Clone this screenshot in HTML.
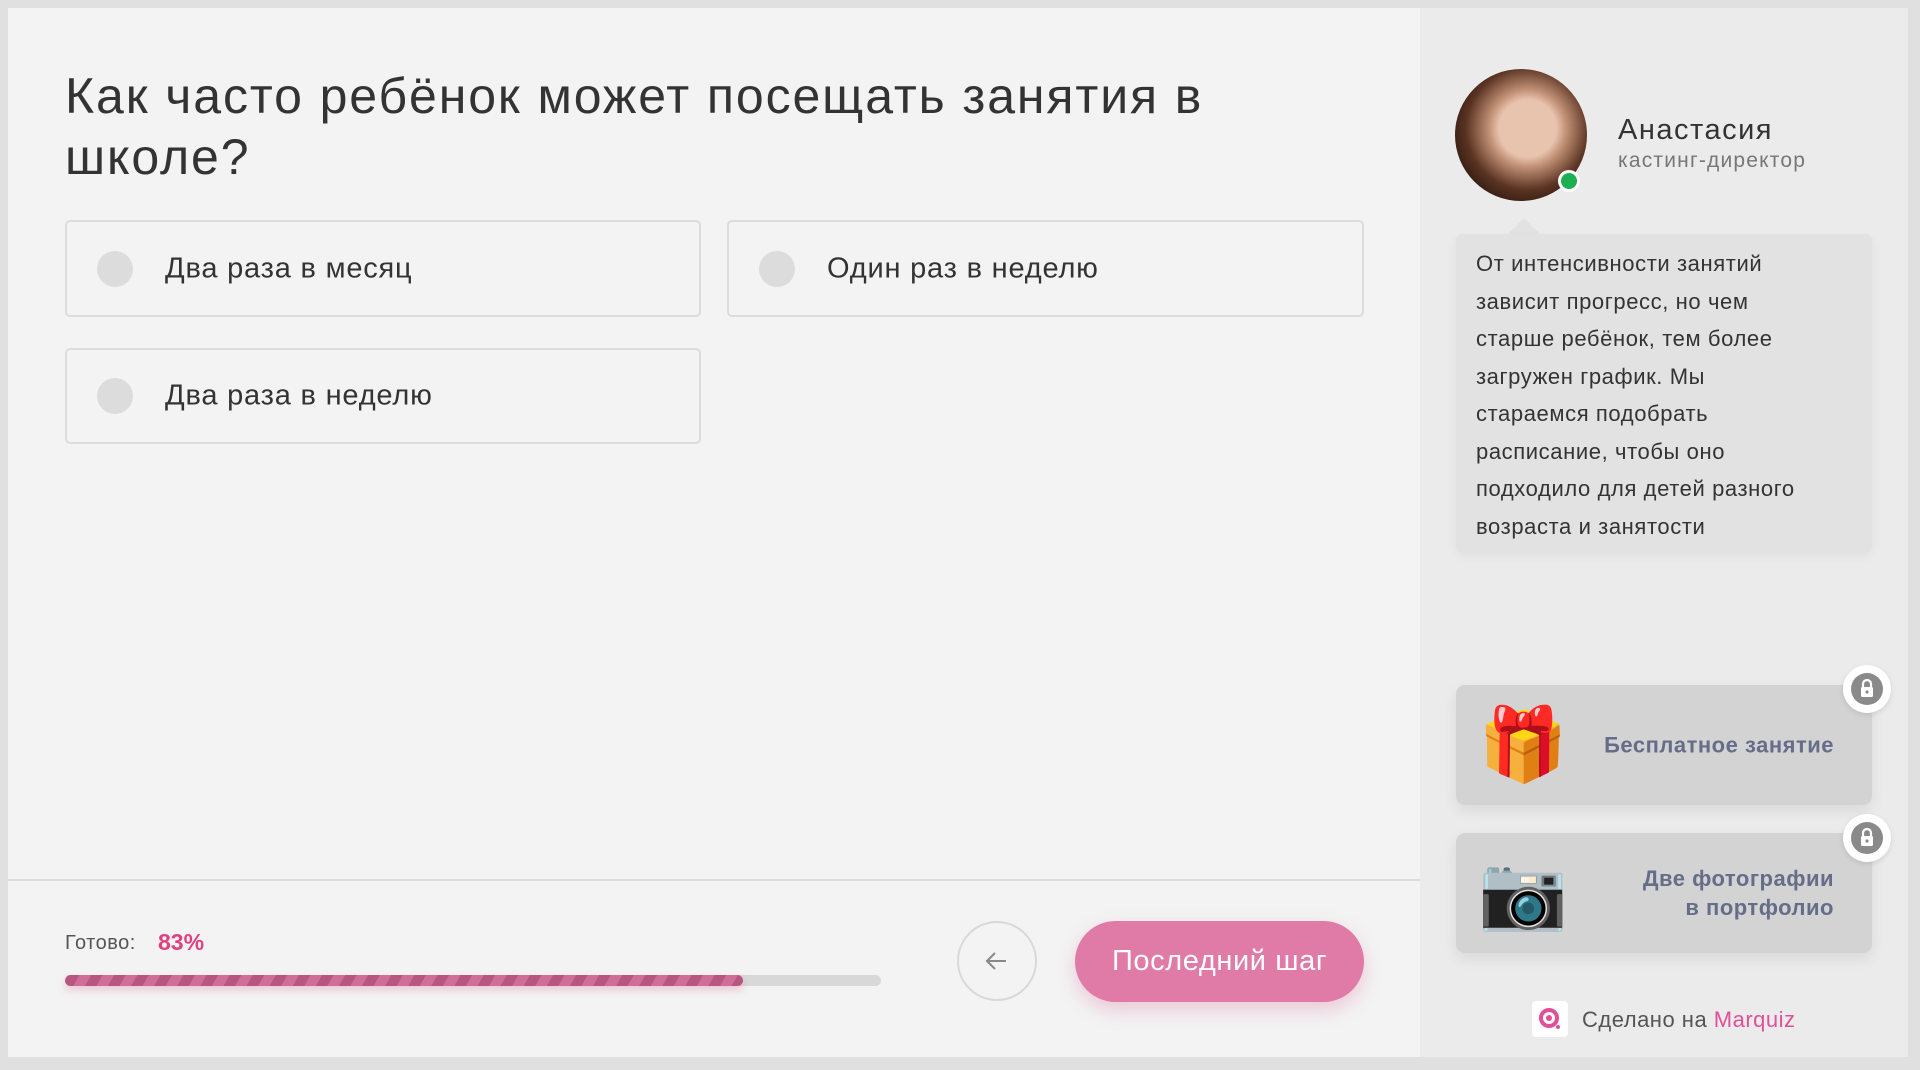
<!DOCTYPE html>
<html><head><meta charset="utf-8"><style>
*{margin:0;padding:0;box-sizing:border-box}
body{width:1920px;height:1070px;background:#e0e0e0;font-family:"Liberation Sans",sans-serif;position:relative;overflow:hidden}
.main{position:absolute;left:8px;top:8px;width:1412px;height:1049px;background:#f3f3f3}
.side{position:absolute;left:1420px;top:8px;width:488px;height:1049px;background:#ebebeb}
.a{position:absolute}
h1{position:absolute;left:65px;top:66px;font-size:50px;font-weight:normal;line-height:61px;color:#333;width:1250px;letter-spacing:1.9px}
.opt{position:absolute;border:2px solid #dcdcdc;border-radius:5px;background:#f3f3f3}
.opt .r{position:absolute;left:30px;top:50%;margin-top:-18px;width:36px;height:36px;border-radius:50%;background:#dcdcdc}
.opt span{position:absolute;left:98px;top:50%;transform:translateY(-50%);font-size:29px;color:#333;letter-spacing:0.8px}
.card{position:absolute;left:1456px;width:416px;height:120px;background:#d3d3d3;border-radius:9px;box-shadow:0 6px 14px rgba(0,0,0,.08)}
.card .t{position:absolute;right:38px;top:50%;transform:translateY(-50%);text-align:right;color:#656d88;font-weight:bold;font-size:22px;line-height:29px;letter-spacing:0.5px}
.lock{position:absolute;width:48px;height:48px;border-radius:50%;background:#fff;box-shadow:0 2px 6px rgba(0,0,0,.1)}
.lock i{position:absolute;left:8px;top:8px;width:32px;height:32px;border-radius:50%;background:#8a8a8a}
</style></head><body>
<div class="main"></div>
<div class="side"></div>
<h1>Как часто ребёнок может посещать занятия в школе?</h1>
<div class="opt" style="left:65px;top:220px;width:636px;height:97px"><div class="r"></div><span>Два раза в месяц</span></div>
<div class="opt" style="left:727px;top:220px;width:637px;height:97px"><div class="r"></div><span>Один раз в неделю</span></div>
<div class="opt" style="left:65px;top:348px;width:636px;height:96px"><div class="r"></div><span>Два раза в неделю</span></div>
<div class="a" style="left:8px;top:879px;width:1412px;height:2px;background:#dcdcdc"></div>
<div class="a" style="left:65px;top:932px;font-size:20px;color:#555;letter-spacing:0.5px">Готово:</div>
<div class="a" style="left:158px;top:929px;font-size:23px;color:#e0407f;font-weight:bold">83%</div>
<div class="a" style="left:65px;top:975px;width:816px;height:11px;border-radius:6px;background:#d8d8d8"></div>
<div class="a" style="left:65px;top:975px;width:678px;height:11px;border-radius:6px;background:repeating-linear-gradient(-60deg,#b85682 0 10px,#cf6e98 10px 20px);box-shadow:0 4px 8px rgba(224,64,127,.25)"></div>
<div class="a" style="left:957px;top:921px;width:80px;height:80px;border-radius:50%;border:2px solid #d8d8d8"></div>
<svg class="a" style="left:984px;top:948px" width="26" height="26" viewBox="0 0 26 26"><path d="M22 13H4M11 5l-8 8 8 8" fill="none" stroke="#888" stroke-width="2"/></svg>
<div class="a" style="left:1075px;top:921px;width:289px;height:81px;border-radius:41px;background:#e07aa6;color:#fff;font-size:29px;text-align:center;line-height:81px;letter-spacing:0.6px;box-shadow:0 8px 18px rgba(224,122,166,.35)">Последний шаг</div>

<div class="a" style="left:1455px;top:69px;width:132px;height:132px;border-radius:50%;background:radial-gradient(circle at 55% 45%,#e8c3ad 0 28%,#c08f74 38%,#5a3322 60%,#2a1710 80%)"></div>
<div class="a" style="left:1558px;top:170px;width:22px;height:22px;border-radius:50%;background:#1cb050;border:3px solid #fff"></div>
<div class="a" style="left:1618px;top:114px;font-size:29px;color:#333;letter-spacing:1.5px">Анастасия</div>
<div class="a" style="left:1618px;top:149px;font-size:21px;color:#777;letter-spacing:1.2px">кастинг-директор</div>
<div class="a" style="left:1508px;top:218px;width:0;height:0;border-left:16px solid transparent;border-right:16px solid transparent;border-bottom:16px solid #e2e2e2"></div>
<div class="a" style="left:1456px;top:234px;width:416px;height:318px;background:#e2e2e2;border-radius:6px;box-shadow:0 4px 10px rgba(0,0,0,.05);padding:11px 20px;font-size:22px;line-height:37.5px;color:#333;letter-spacing:0.6px"><div style="width:348px">От интенсивности занятий зависит прогресс, но чем старше ребёнок, тем более загружен график. Мы стараемся подобрать расписание, чтобы оно подходило для детей разного возраста и занятости</div></div>

<div class="card" style="top:685px"><div class="a" style="left:22px;top:18px;font-size:72px;line-height:84px">🎁</div><div class="t">Бесплатное занятие</div></div>
<div class="lock" style="left:1843px;top:665px"><i></i></div>
<div class="card" style="top:833px"><div class="a" style="left:22px;top:18px;font-size:72px;line-height:84px">📷</div><div class="t">Две фотографии<br>в портфолио</div></div>
<div class="lock" style="left:1843px;top:814px"><i></i></div>
<svg class="a" style="left:1860px;top:678px" width="14" height="20" viewBox="0 0 14 20"><path d="M3 9V6a4 4 0 018 0v3" fill="none" stroke="#fff" stroke-width="2.2"/><rect x="1" y="9" width="12" height="10" rx="1.5" fill="#fff"/><circle cx="7" cy="14" r="1.6" fill="#8a8a8a"/></svg>
<svg class="a" style="left:1860px;top:827px" width="14" height="20" viewBox="0 0 14 20"><path d="M3 9V6a4 4 0 018 0v3" fill="none" stroke="#fff" stroke-width="2.2"/><rect x="1" y="9" width="12" height="10" rx="1.5" fill="#fff"/><circle cx="7" cy="14" r="1.6" fill="#8a8a8a"/></svg>

<div class="a" style="left:1532px;top:1001px;width:36px;height:36px;background:#fff;border-radius:4px"></div>
<svg class="a" style="left:1536px;top:1005px" width="28" height="28" viewBox="0 0 28 28"><circle cx="13" cy="13" r="8" fill="none" stroke="#e0509a" stroke-width="4"/><circle cx="13" cy="13" r="3" fill="#e0509a"/><circle cx="22" cy="22" r="2" fill="#e0509a"/></svg>
<div class="a" style="left:1582px;top:1007px;font-size:22px;color:#555;letter-spacing:0.5px">Сделано на <span style="color:#e0509a">Marquiz</span></div>
</body></html>
